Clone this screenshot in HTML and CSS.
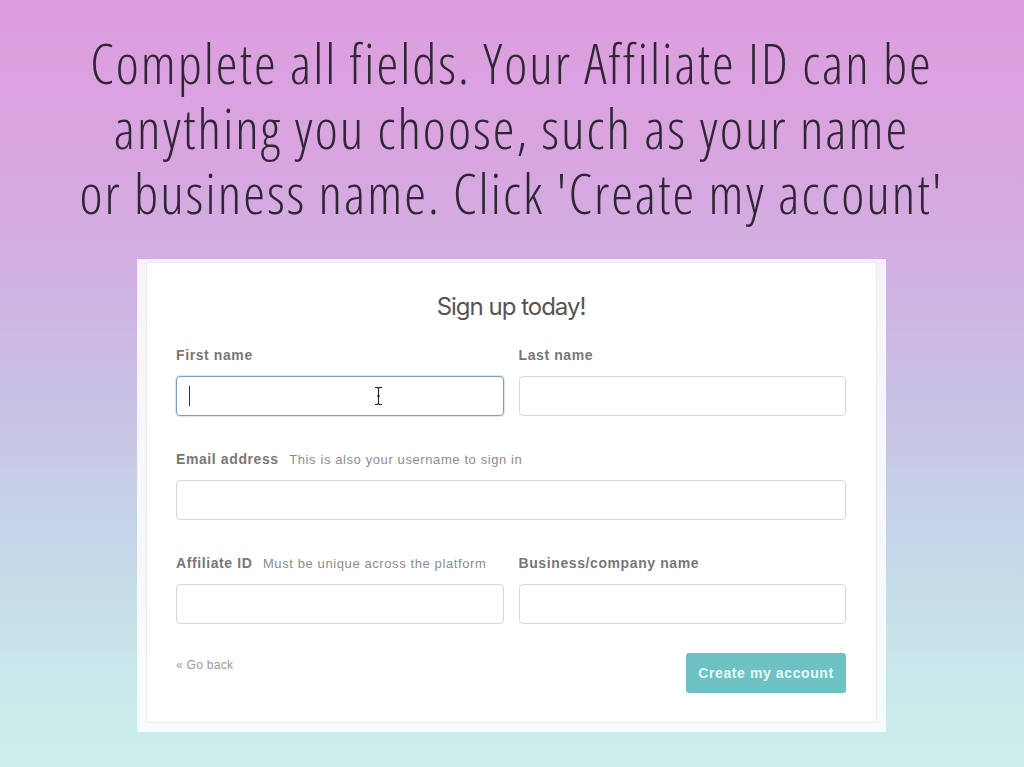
FILE: index.html
```html
<!DOCTYPE html>
<html lang="en">
<head>
    <meta charset="UTF-8">
    <meta name="viewport" content="width=device-width, initial-scale=1.0">
    <title>Sign up today!</title>
    <link rel="stylesheet" href="styles.css">
</head>
<body>
    <div class="page">
        <h1 class="headline">Complete all fields. Your Affiliate ID can be<br>anything you choose, such as your name<br>or business name. Click 'Create my account'</h1>

        <div class="frame">
            <form class="card">
                <h2 class="title">Sign up today!</h2>

                <div class="group row">
                    <div class="field">
                        <label>First name</label>
                        <div class="input-wrap">
                            <input type="text" class="input focused">
                            <span class="caret"></span>
                            <svg class="ibeam" width="9" height="20" viewBox="0 0 9 20">
                                <path d="M1 1.5h2.5l1 1 1-1H8M4.5 2.5v15M1 18.5h2.5l1-1 1 1H8M3 10h3" fill="none" stroke="#fff" stroke-width="2.6"/>
                                <path d="M1 1.5h2.5l1 1 1-1H8M4.5 2.5v15M1 18.5h2.5l1-1 1 1H8M3 10h3" fill="none" stroke="#222" stroke-width="1.1"/>
                            </svg>
                        </div>
                    </div>
                    <div class="field">
                        <label>Last name</label>
                        <input type="text" class="input">
                    </div>
                </div>

                <div class="group field">
                    <label>Email address <span class="hint">This is also your username to sign in</span></label>
                    <input type="email" class="input">
                </div>

                <div class="group row tight">
                    <div class="field">
                        <label>Affiliate ID <span class="hint">Must be unique across the platform</span></label>
                        <input type="text" class="input">
                    </div>
                    <div class="field">
                        <label>Business/company name</label>
                        <input type="text" class="input">
                    </div>
                </div>

                <div class="actions">
                    <a class="back" href="#">&laquo; Go back</a>
                    <button type="button" class="submit">Create my account</button>
                </div>
            </form>
        </div>
    </div>
</body>
</html>
```

FILE: styles.css
```css
html, body {
    margin: 0;
    padding: 0;
}

body {
    min-height: 767px;
    font-family: "Liberation Sans", Arial, sans-serif;
    background: linear-gradient(180deg, #de9ddf 0%, #d8a6e1 22%, #cfb3e3 38%, #c8c4e6 55%, #c5d6e8 70%, #c9e6ea 86%, #cdeeea 100%);
}

.page {
    padding: 30px 1px 0 0;
}

.headline {
    margin: 0;
    text-align: center;
    font-family: "Open Sans", sans-serif;
    font-weight: 300;
    font-stretch: 75%;
    font-size: 55px;
    line-height: 65px;
    letter-spacing: 2px;
    color: #2f2734;
}

.frame {
    width: 749px;
    box-sizing: border-box;
    margin: 34px auto 0;
    padding: 3px 9px 9px 9px;
    background: rgba(255, 255, 255, 0.85);
}

.card {
    background: #fff;
    border: 1px solid #ebebeb;
    padding: 29px 30px 29px 29px;
}

.title {
    margin: 0 0 24px;
    text-align: center;
    font-family: Inter, sans-serif;
    font-weight: 400;
    font-size: 24px;
    line-height: 30px;
    letter-spacing: -1px;
    color: #555;
}

.group {
    margin-bottom: 34px;
}

.group.tight {
    margin-bottom: 29px;
}

.row {
    display: grid;
    grid-template-columns: 1fr 1fr;
    gap: 15px;
}

.field label {
    display: block;
    margin-bottom: 12px;
    font-size: 14px;
    line-height: 18px;
    font-weight: bold;
    letter-spacing: 0.6px;
    color: #777;
}

.hint {
    margin-left: 6px;
    font-size: 13px;
    line-height: 1;
    font-weight: normal;
    letter-spacing: 0.6px;
    color: #8c8c8c;
}

.input {
    display: block;
    width: 100%;
    height: 40px;
    box-sizing: border-box;
    border: 1px solid #d6d6d6;
    border-radius: 4px;
    background: #fff;
    padding: 0 12px;
    font-size: 14px;
    outline: none;
}

.input.focused {
    border-color: #7f9dc7;
    box-shadow: 0 0 0 1px rgba(127, 157, 199, 0.25);
}

.input-wrap {
    position: relative;
}

.caret {
    position: absolute;
    left: 13px;
    top: 10px;
    width: 1px;
    height: 20px;
    background: #333;
}

.ibeam {
    position: absolute;
    left: 198px;
    top: 10px;
}

.actions {
    display: flex;
    justify-content: space-between;
    align-items: flex-start;
}

.back {
    margin-top: 5px;
    font-size: 12px;
    letter-spacing: 0.3px;
    color: #9a9a9a;
    text-decoration: none;
}

.submit {
    width: 160px;
    height: 40px;
    border: none;
    border-radius: 3px;
    background: #6dc3c4;
    color: #eaf7f7;
    font-family: "Liberation Sans", Arial, sans-serif;
    font-size: 14px;
    font-weight: bold;
    letter-spacing: 0.6px;
    cursor: pointer;
}
```
